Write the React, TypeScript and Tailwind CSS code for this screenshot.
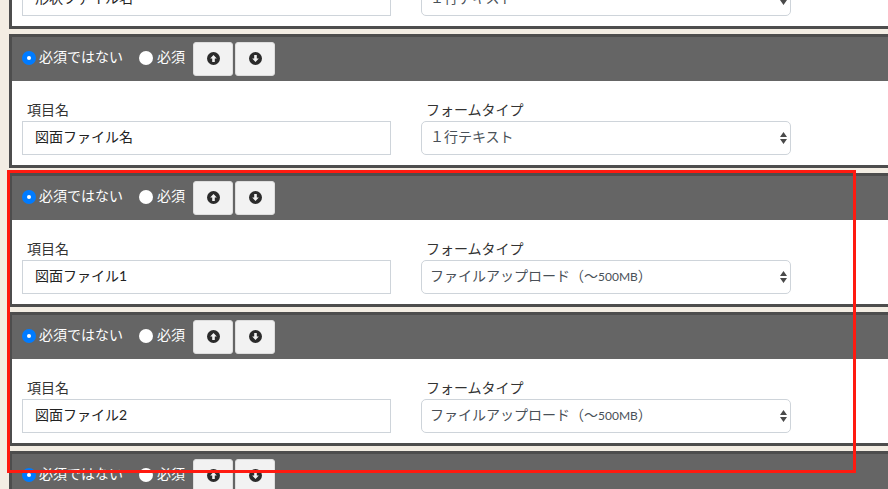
import React from "react";

function Radio({ checked, label }: { checked?: boolean; label: string }) {
  return (
    <label className={`flex items-center text-white text-[14px] leading-[20px] -mt-[5px] ${checked ? "gap-[3px]" : "gap-[4px]"}`}>
      {checked ? (
        <span className="mt-[2px] w-[14px] h-[14px] rounded-full bg-[#007bff] flex items-center justify-center">
          <span className="w-[4px] h-[4px] rounded-full bg-white" />
        </span>
      ) : (
        <span className="mt-[2px] w-[14px] h-[14px] rounded-full bg-white" />
      )}
      <span>{label}</span>
    </label>
  );
}

function Arrow({ down }: { down?: boolean }) {
  return (
    <svg className="w-[13px] h-[13px] -mt-[1px]" viewBox="0 0 13 13">
      <circle cx="6.5" cy="6.5" r="6.5" fill="#2b2b2b" />
      <path
        d={down ? "M5.2 3h2.6v3.4h2L6.5 10 3.2 6.4h2z" : "M5.2 10h2.6V6.6h2L6.5 3 3.2 6.6h2z"}
        fill="#f2f2f2"
      />
    </svg>
  );
}

function Card({ name, upload }: { name: string; upload?: boolean }) {
  return (
    <section className="border-[3px] border-[#4d4d4d] bg-white w-[900px] shrink-0">
      <div className="h-[44px] bg-[#656565] flex items-center pl-[10px]">
        <Radio checked label="必須ではない" />
        <div className="w-[16px]" />
        <Radio label="必須" />
        <button className="ml-[8px] w-[40px] h-[34px] bg-[#f2f2f2] border border-[#dddddd] rounded-[3px] flex items-center justify-center">
          <Arrow />
        </button>
        <button className="ml-[2px] w-[40px] h-[34px] bg-[#f2f2f2] border border-[#dddddd] rounded-[3px] flex items-center justify-center">
          <Arrow down />
        </button>
      </div>
      <div className="h-[84px] pl-[10px] pt-[19px] flex gap-[30px]">
        <div className="w-[369px]">
          <div className="pl-[5px] mb-[1px] text-[14px] leading-[20px] text-[#333333]">項目名</div>
          <input
            readOnly
            value={name}
            className="w-full h-[34px] border border-[#ced4da] pl-[12px] pb-[5px] text-[14px] text-[#222222] bg-white outline-none"
          />
        </div>
        <div className="w-[370px]">
          <div className="pl-[5px] mb-[1px] text-[14px] leading-[20px] text-[#333333]">フォームタイプ</div>
          <div className="relative w-full h-[34px] border border-[#ced4da] rounded-[5px] bg-white text-[#495057] pl-[8px] pb-[3px] text-[14px] flex items-center">
            {upload ? (
              <span>
                ファイルアップロード（〜<span className="text-[12px]">500MB</span>）
              </span>
            ) : (
              <span>１行テキスト</span>
            )}
            <svg className="absolute right-[2px] top-[9px] w-[9px] h-[14px]" viewBox="0 0 9 14">
              <path d="M4.5 1 8 6H1z M1 8h7l-3.5 5z" fill="#4a4a4a" />
            </svg>
          </div>
        </div>
      </div>
    </section>
  );
}

export default function App() {
  return (
    <div
      className="relative h-[489px] w-[888px] overflow-hidden bg-[#f3ede3]"
      style={{ fontFamily: '"Lato", "Noto Sans CJK JP", sans-serif' }}
    >
      <div className="flex flex-col gap-[5px] pl-[9px] -mt-[105px]">
        <Card name="形状ファイル名" />
        <Card name="図面ファイル名" />
        <Card name="図面ファイル1" upload />
        <Card name="図面ファイル2" upload />
        <Card name="" />
      </div>
      <div className="absolute left-[7px] top-[170px] w-[849px] h-[303px] border-[3px] border-[#ff1a10] pointer-events-none" />
    </div>
  );
}
